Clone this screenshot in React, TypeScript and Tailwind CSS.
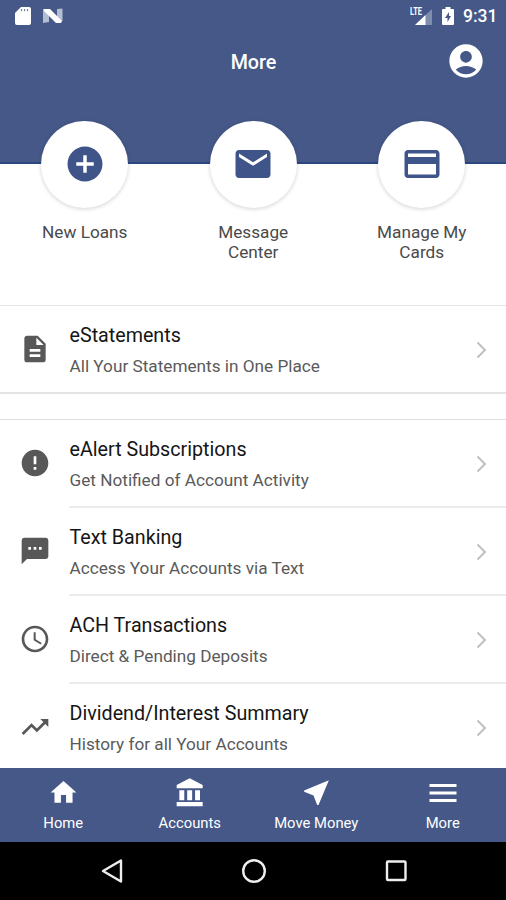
import React from 'react';
import type { IconType } from 'react-icons';
import {
  MdAccessTime,
  MdAccountCircle,
  MdAddCircle,
  MdCreditCard,
  MdDescription,
  MdEmail,
  MdError,
  MdHome,
  MdMenu,
  MdNearMe,
  MdSms,
  MdTrendingUp,
} from 'react-icons/md';

interface MenuItem {
  title: string;
  subtitle: string;
  icon: IconType;
}

const BankIcon: React.FC<{ size?: number }> = ({ size = 24 }) => (
  <svg width={size} height={size} viewBox="0 0 24 24" fill="currentColor">
    <path d="M4 10v7.500h3.700V10H4zm5.900 0v7.500h3.700V10H9.900zM2 22h19.500v-3.200H2V22zm13.800-12v7.500h3.700V10h-3.700zM11.750 1L2 6v2.500h19.500V6L11.750 1z" />
  </svg>
);

const quickActions: { lines: string[]; icon: IconType }[] = [
  { lines: ['New Loans'], icon: MdAddCircle },
  { lines: ['Message', 'Center'], icon: MdEmail },
  { lines: ['Manage My', 'Cards'], icon: MdCreditCard },
];

const statements: MenuItem = {
  title: 'eStatements',
  subtitle: 'All Your Statements in One Place',
  icon: MdDescription,
};

const menuItems: MenuItem[] = [
  { title: 'eAlert Subscriptions', subtitle: 'Get Notified of Account Activity', icon: MdError },
  { title: 'Text Banking', subtitle: 'Access Your Accounts via Text', icon: MdSms },
  { title: 'ACH Transactions', subtitle: 'Direct & Pending Deposits', icon: MdAccessTime },
  { title: 'Dividend/Interest Summary', subtitle: 'History for all Your Accounts', icon: MdTrendingUp },
];

const tabs: { label: string; icon: React.ComponentType<{ size?: number }>; size: number }[] = [
  { label: 'Home', icon: MdHome, size: 31 },
  { label: 'Accounts', icon: BankIcon, size: 32 },
  { label: 'Move Money', icon: MdNearMe, size: 33 },
  { label: 'More', icon: MdMenu, size: 36 },
];

const StatusBar: React.FC = () => (
  <div className="flex h-8 items-center justify-between pl-[15px] pr-[10px]">
    <div className="flex items-center gap-[12px]">
      <svg width="16" height="20" viewBox="0 0 16 20">
        <path d="M6 1h8q2 0 2 2v14q0 2-2 2H2q-2 0-2-2V7z" fill="#fff" />
        <path d="M6.500 3v2.200M9.500 3v2.200M12.500 3v2.200" stroke="#7684a8" strokeWidth="1.200" />
      </svg>
      <svg width="20" height="16" viewBox="0 0 20 16">
        <path d="M0 1l6 2v11l-6 1zM14 1l5.500-.5V13l-5.500 1z" fill="#b4bed3" />
        <path d="M1 1h6l12 12-1 2h-5L1 3z" fill="#fff" />
      </svg>
    </div>
    <div className="flex items-center">
      <svg width="23" height="20" viewBox="0 0 23 20">
        <path d="M22 3v16H5z" fill="#7f8dae" />
        <path d="M15.500 9v10H5z" fill="#fff" />
        <text x="0" y="8.500" fill="#fff" fontFamily="Roboto, sans-serif" fontSize="10" fontWeight="700" textLength="12" lengthAdjust="spacingAndGlyphs">LTE</text>
      </svg>
      <svg className="ml-[9px]" width="12" height="20" viewBox="0 0 12 20">
        <path d="M3.500 1h5v2H11q1 0 1 1v14q0 1-1 1H1q-1 0-1-1V4q0-1 1-1h2.500z" fill="#fff" />
        <path d="M7 6l-4 6h2.500v4L9 10H7z" fill="#455888" />
      </svg>
      <span className="ml-[9px] w-[33px] whitespace-nowrap text-[17.5px] font-medium leading-5">9:31</span>
    </div>
  </div>
);

const ListRow: React.FC<{ item: MenuItem; divider?: boolean }> = ({ item, divider }) => {
  const Icon = item.icon;
  return (
    <div className={`flex shrink-0 ${divider ? 'h-[88px]' : 'h-[86px]'}`}>
      <div className={`flex w-[69px] items-center justify-center ${divider ? 'pb-0.5' : ''}`}>
        <Icon size={32} className="text-[#585858]" />
      </div>
      <div className={`flex flex-1 items-center justify-between pr-[19px] ${divider ? 'border-b-2 border-[#ebebeb]' : ''}`}>
        <div className="whitespace-nowrap pl-[0.5px] pt-[3px]">
          <p className="text-[19.7px] leading-[30px] text-[#151515]">{item.title}</p>
          <p className="text-[17.2px] leading-[30px] text-[#5a5a5a]">{item.subtitle}</p>
        </div>
        <svg className="mt-0.5" width="11" height="18" viewBox="0 0 11 18" fill="none" stroke="#bdbdbd" strokeWidth="1.800">
          <path d="M1.500 1.500L9 9l-7.500 7.500" />
        </svg>
      </div>
    </div>
  );
};

export default function App() {
  return (
    <div className="flex h-[900px] w-[506px] flex-col overflow-hidden bg-white font-['Roboto',sans-serif]">
      <header className="h-[164px] shrink-0 border-b-2 border-[#2c4880] bg-[#455888] text-white">
        <StatusBar />
        <div className="grid h-[58px] grid-cols-3 items-center">
          <h1 className="col-start-2 pl-px pt-[3px] text-center text-[19.7px] font-medium">More</h1>
          <MdAccountCircle size={40} className="mr-5 justify-self-end" />
        </div>
      </header>

      {/* Quick actions overlap the bottom edge of the header */}
      <section className="relative -mt-[43px] grid h-[184px] shrink-0 grid-cols-3 pl-[0.5px]">
        {quickActions.map(({ lines, icon: Icon }) => (
          <div key={lines[0]} className="flex flex-col items-center">
            <div className="flex size-[87px] items-center justify-center rounded-full bg-white pb-px shadow-[0_1px_4px_rgba(0,0,0,0.18)]">
              <Icon size={42} className="text-[#3f5589]" />
            </div>
            <div className="mt-[14px] text-center text-[17.2px] leading-5 text-[#4a4a4a]">
              {lines.map(line => <p key={line}>{line}</p>)}
            </div>
          </div>
        ))}
      </section>

      <main className="flex min-h-0 flex-1 flex-col overflow-hidden">
        <div className="h-[89px] shrink-0 border-b-2 border-t border-[#e4e4e4]">
          <ListRow item={statements} />
        </div>
        <div className="mt-[25px] border-t border-[#dedede]">
          {menuItems.map((item, i) => (
            <ListRow key={item.title} item={item} divider={i < menuItems.length - 1} />
          ))}
        </div>
      </main>

      <nav className="grid h-[74px] shrink-0 grid-cols-4 bg-[#455888] text-white">
        {tabs.map(({ label, icon: Icon, size }) => (
          <div key={label} className="flex flex-col items-center">
            <div className="flex h-[49px] items-center justify-center">
              <Icon size={size} />
            </div>
            <span className="text-[14.8px] leading-[12px]">{label}</span>
          </div>
        ))}
      </nav>

      <div className="flex h-[58px] shrink-0 items-center justify-center bg-black">
        <svg width="310" height="28" viewBox="0 0 310 28" fill="none" stroke="#eee" strokeWidth="2.400">
          <path d="M23 3.500v21L5 14z" strokeLinejoin="round" />
          <circle cx="156" cy="14" r="10.800" />
          <rect x="289" y="4.500" width="18.500" height="18.500" rx="1" />
        </svg>
      </div>
    </div>
  );
}
